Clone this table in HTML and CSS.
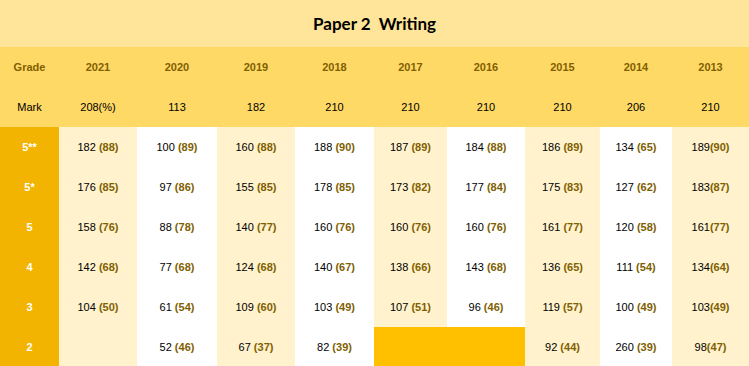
FILE: index.html
```html
<!DOCTYPE html>
<html>
<head>
<meta charset="utf-8">
<link rel="stylesheet" href="styles.css">
</head>
<body>
<table class="grid">
  <colgroup>
    <col class="w59"><col class="w78"><col class="w80"><col class="w78"><col class="w79"><col class="w73"><col class="w78"><col class="w75"><col class="w72"><col class="w77">
  </colgroup>
  <tr class="title-row"><td colspan="10" class="title">Paper 2&nbsp; Writing</td></tr>
  <tr class="head-row">
    <td class="hd">Grade</td><td class="hd">2021</td><td class="hd">2020</td><td class="hd">2019</td><td class="hd">2018</td><td class="hd">2017</td><td class="hd">2016</td><td class="hd">2015</td><td class="hd">2014</td><td class="hd">2013</td>
  </tr>
  <tr class="head-row">
    <td>Mark</td><td>208(%)</td><td>113</td><td>182</td><td>210</td><td>210</td><td>210</td><td>210</td><td>206</td><td>210</td>
  </tr>
  <tr class="row">
    <td class="grade">5**</td>
    <td class="lt">182 <b>(88)</b></td><td>100 <b>(89)</b></td><td class="lt">160 <b>(88)</b></td><td>188 <b>(90)</b></td><td class="lt">187 <b>(89)</b></td><td>184 <b>(88)</b></td><td class="lt">186 <b>(89)</b></td><td>134 <b>(65)</b></td><td class="lt">189<b>(90)</b></td>
  </tr>
  <tr class="row">
    <td class="grade">5*</td>
    <td class="lt">176 <b>(85)</b></td><td>97 <b>(86)</b></td><td class="lt">155 <b>(85)</b></td><td>178 <b>(85)</b></td><td class="lt">173 <b>(82)</b></td><td>177 <b>(84)</b></td><td class="lt">175 <b>(83)</b></td><td>127 <b>(62)</b></td><td class="lt">183<b>(87)</b></td>
  </tr>
  <tr class="row">
    <td class="grade">5</td>
    <td class="lt">158 <b>(76)</b></td><td>88 <b>(78)</b></td><td class="lt">140 <b>(77)</b></td><td>160 <b>(76)</b></td><td class="lt">160 <b>(76)</b></td><td>160 <b>(76)</b></td><td class="lt">161 <b>(77)</b></td><td>120 <b>(58)</b></td><td class="lt">161<b>(77)</b></td>
  </tr>
  <tr class="row">
    <td class="grade">4</td>
    <td class="lt">142 <b>(68)</b></td><td>77 <b>(68)</b></td><td class="lt">124 <b>(68)</b></td><td>140 <b>(67)</b></td><td class="lt">138 <b>(66)</b></td><td>143 <b>(68)</b></td><td class="lt">136 <b>(65)</b></td><td>111 <b>(54)</b></td><td class="lt">134<b>(64)</b></td>
  </tr>
  <tr class="row">
    <td class="grade">3</td>
    <td class="lt">104 <b>(50)</b></td><td>61 <b>(54)</b></td><td class="lt">109 <b>(60)</b></td><td>103 <b>(49)</b></td><td class="lt">107 <b>(51)</b></td><td>96 <b>(46)</b></td><td class="lt">119 <b>(57)</b></td><td>100 <b>(49)</b></td><td class="lt">103<b>(49)</b></td>
  </tr>
  <tr class="row last">
    <td class="grade">2</td>
    <td class="lt"></td><td>52 <b>(46)</b></td><td class="lt">67 <b>(37)</b></td><td>82 <b>(39)</b></td><td colspan="2" class="gold"></td><td class="lt">92 <b>(44)</b></td><td>260 <b>(39)</b></td><td class="lt">98<b>(47)</b></td>
  </tr>
</table>
</body>
</html>
```
FILE: styles.css
```css
html, body {
  margin: 0;
  padding: 0;
  background: #ffffff;
}
.grid {
  width: 749px;
  table-layout: fixed;
  border-collapse: collapse;
  border-spacing: 0;
  font-family: "Liberation Sans", Arial, sans-serif;
  font-size: 11px;
  color: #000000;
}
.grid td {
  padding: 0;
  text-align: center;
  vertical-align: middle;
  white-space: nowrap;
}
.grid b {
  color: #7f6000;
  font-weight: bold;
}
.w59 { width: 59px; }
.w72 { width: 72px; }
.w73 { width: 73px; }
.w75 { width: 75px; }
.w77 { width: 77px; }
.w78 { width: 78px; }
.w79 { width: 79px; }
.w80 { width: 80px; }
.title-row td {
  height: 47px;
  background: #ffe599;
}
.title {
  font-family: Lato, "Liberation Sans", sans-serif;
  font-weight: 700;
  font-size: 17px;
  color: #000000;
  padding-bottom: 2px;
}
.head-row td {
  height: 40px;
  background: #ffd966;
}
.head-row .hd {
  font-weight: bold;
  color: #7f6000;
}
.row td {
  height: 40px;
}
.row.last td {
  height: 39px;
}
.grade {
  background: #f2b400;
  color: #ffffff;
  font-weight: bold;
}
.lt {
  background: #fff2cc;
}
.gold {
  background: #ffc000;
}
```
